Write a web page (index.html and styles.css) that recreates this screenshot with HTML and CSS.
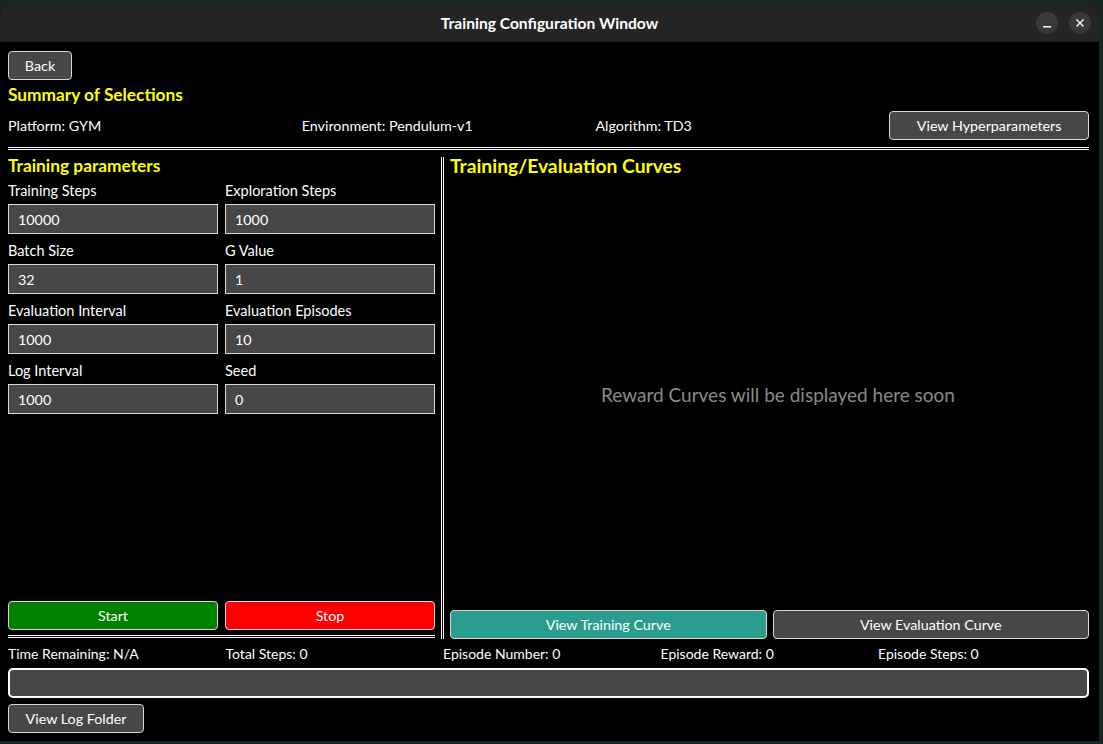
FILE: index.html
```html
<!DOCTYPE html>
<html>
<head>
<meta charset="utf-8">
<link rel="stylesheet" href="styles.css">
</head>
<body>
<div class="window">
  <div class="titlebar">
    <div class="title">Training Configuration Window</div>
    <div class="wm-buttons">
      <span class="wm-btn"><svg width="10" height="10" viewBox="0 0 10 10"><rect x="1" y="8" width="8" height="1.5" fill="#fff"/></svg></span>
      <span class="wm-btn"><svg width="10" height="10" viewBox="0 0 10 10"><path d="M1.5 1.5 L8.5 8.5 M8.5 1.5 L1.5 8.5" stroke="#fff" stroke-width="1.4"/></svg></span>
    </div>
  </div>
  <div class="content">
    <div class="back-row"><button class="btn back">Back</button></div>
    <h2 class="heading summary">Summary of Selections</h2>
    <div class="info-row">
      <span class="info">Platform: GYM</span>
      <span class="info">Environment: Pendulum-v1</span>
      <span class="info">Algorithm: TD3</span>
      <button class="btn hyper">View Hyperparameters</button>
    </div>
    <div class="hsep"></div>
    <div class="main">
      <div class="left">
        <h2 class="heading params">Training parameters</h2>
        <div class="fields">
          <div class="field"><label>Training Steps</label><div class="input">10000</div></div>
          <div class="field"><label>Exploration Steps</label><div class="input">1000</div></div>
          <div class="field"><label>Batch Size</label><div class="input">32</div></div>
          <div class="field"><label>G Value</label><div class="input">1</div></div>
          <div class="field"><label>Evaluation Interval</label><div class="input">1000</div></div>
          <div class="field"><label>Evaluation Episodes</label><div class="input">10</div></div>
          <div class="field"><label>Log Interval</label><div class="input">1000</div></div>
          <div class="field"><label>Seed</label><div class="input">0</div></div>
        </div>
        <div class="action-row">
          <button class="btn start">Start</button>
          <button class="btn stop">Stop</button>
        </div>
        <div class="hsep left-sep"></div>
      </div>
      <div class="vsep"></div>
      <div class="right">
        <h2 class="heading curves">Training/Evaluation Curves</h2>
        <div class="placeholder">Reward Curves will be displayed here soon</div>
        <div class="curve-row">
          <button class="btn train">View Training Curve</button>
          <button class="btn eval">View Evaluation Curve</button>
        </div>
      </div>
    </div>
    <div class="status-row">
      <span>Time Remaining: N/A</span>
      <span>Total Steps: 0</span>
      <span>Episode Number: 0</span>
      <span>Episode Reward: 0</span>
      <span>Episode Steps: 0</span>
    </div>
    <div class="progress"></div>
    <div class="log-row"><button class="btn log">View Log Folder</button></div>
  </div>
</div>
</body>
</html>
```
FILE: styles.css
```css
* { box-sizing: border-box; }
html, body { margin: 0; padding: 0; }
body {
  width: 1103px;
  height: 744px;
  background: #1a2525;
  font-family: "Lato", "Noto Sans", sans-serif;
  color: #ffffff;
  overflow: hidden;
}
.window {
  margin-top: 4px;
  width: 1099px;
  height: 737px;
  background: #000;
  border-radius: 12px 12px 0 0;
  overflow: hidden;
  display: flex;
  flex-direction: column;
}
.titlebar {
  height: 38px;
  background: #242424;
  border-bottom: 1px solid #1a1a1a;
  position: relative;
  display: flex;
  align-items: center;
  justify-content: center;
  flex-shrink: 0;
}
.title {
  font-weight: bold;
  font-size: 15.6px;
  color: #ffffff;
}
.wm-buttons {
  position: absolute;
  right: 8px;
  top: 8px;
  display: flex;
  gap: 11px;
}
.wm-btn {
  width: 22px;
  height: 22px;
  border-radius: 50%;
  background: #393939;
  display: flex;
  align-items: center;
  justify-content: center;
}
.content {
  padding: 9px 10px 0 8px;
  display: flex;
  flex-direction: column;
}
.btn {
  font-family: inherit;
  font-size: 14.3px;
  color: #ffffff;
  background: #474747;
  border: 1px solid #d8d8d8;
  border-radius: 4px;
  padding: 0;
  height: 29px;
  cursor: pointer;
}
.back-row { display: flex; }
.back { width: 64px; }
.heading {
  margin: 0;
  color: #ffff00;
  font-weight: bold;
  font-size: 17.3px;
}
.summary {
  line-height: 22px;
  margin-top: 4px;
}
.info-row {
  margin-top: 5px;
  display: flex;
  align-items: center;
  height: 29px;
  font-size: 14.3px;
}
.info { width: 294px; }
.hyper {
  margin-left: auto;
  width: 200px;
}
.hsep {
  margin-top: 7px;
  height: 3px;
  border-top: 1px solid #ffffff;
  border-bottom: 1px solid #ffffff;
}
.main {
  margin-top: 7px;
  height: 482px;
  display: flex;
}
.left {
  width: 427px;
  display: flex;
  flex-direction: column;
}
.params {
  line-height: 18px;
  margin-bottom: 5px;
}
.fields {
  display: grid;
  grid-template-columns: 210px 210px;
  column-gap: 7px;
  row-gap: 6px;
}
.field label {
  display: block;
  font-size: 14.5px;
  line-height: 20px;
  padding-top: 1px;
  height: 20px;
  margin-bottom: 4px;
}
.input {
  height: 30px;
  background: #474747;
  border: 1px solid #d8d8d8;
  font-size: 14.3px;
  line-height: 28px;
  padding-top: 1px;
  padding-left: 9px;
}
.action-row {
  margin-top: auto;
  display: flex;
  gap: 7px;
}
.action-row .btn { width: 210px; }
.start { background: #008000; }
.stop { background: #ff0000; }
.left-sep { margin-top: 5px; margin-bottom: 1px; }
.vsep {
  width: 3px;
  margin: 0 6px;
  border-left: 1px solid #ffffff;
  border-right: 1px solid #ffffff;
}
.right {
  flex: 1;
  display: flex;
  flex-direction: column;
}
.curves {
  font-size: 19.3px;
  line-height: 18px;
}
.placeholder {
  flex: 1;
  display: flex;
  align-items: center;
  justify-content: center;
  color: #8a8a8a;
  font-size: 19px;
  padding-top: 3px;
  padding-left: 17px;
}
.curve-row {
  display: flex;
  gap: 6px;
}
.curve-row .btn { flex: 1; }
.train { background: #2a9d8f; }
.status-row {
  margin-top: 7px;
  display: grid;
  grid-template-columns: repeat(5, 217.5px);
  font-size: 14px;
  line-height: 16px;
}
.progress {
  margin-top: 6px;
  height: 30px;
  background: #474747;
  border: 2px solid #ffffff;
  border-radius: 5px;
}
.log-row { margin-top: 6px; display: flex; }
.log { width: 136px; }
```
